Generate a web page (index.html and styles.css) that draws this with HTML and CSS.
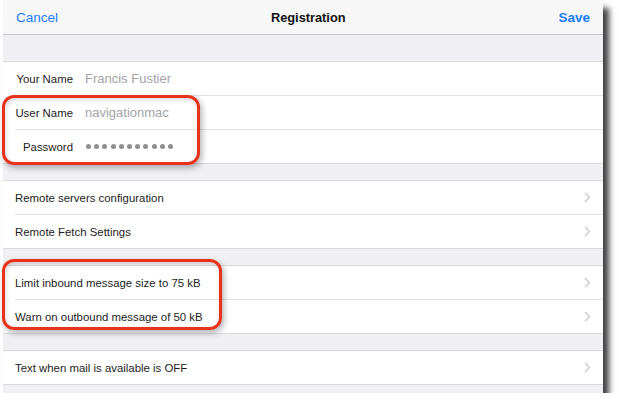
FILE: index.html
```html
<!DOCTYPE html>
<html lang="en">
<head>
  <meta charset="UTF-8" />
  <meta name="viewport" content="width=device-width, initial-scale=1.0"/>
  <title>Registration</title>
  <link rel="stylesheet" href="styles.css">
</head>
<body>
  <div class="screen">
    <div class="navbar">
      <span class="nav-btn">Cancel</span>
      <span class="nav-title">Registration</span>
      <span class="nav-btn save">Save</span>
    </div>

    <div class="group first">
      <div class="row field">
        <span class="label">Your Name</span>
        <span class="value">Francis Fustier</span>
      </div>
      <div class="row field">
        <span class="label">User Name</span>
        <span class="value">navigationmac</span>
      </div>
      <div class="row field">
        <span class="label">Password</span>
        <span class="dots">
          <i></i><i></i><i></i><i></i><i></i><i></i><i></i><i></i><i></i><i></i><i></i>
        </span>
      </div>
    </div>

    <div class="group">
      <div class="row link">
        <span>Remote servers configuration</span>
        <svg class="chev" width="7" height="11" viewBox="0 0 7 11"><polyline points="1,1 5.5,5.5 1,10" /></svg>
      </div>
      <div class="row link">
        <span>Remote Fetch Settings</span>
        <svg class="chev" width="7" height="11" viewBox="0 0 7 11"><polyline points="1,1 5.5,5.5 1,10" /></svg>
      </div>
    </div>

    <div class="group">
      <div class="row link">
        <span>Limit inbound message size to 75 kB</span>
        <svg class="chev" width="7" height="11" viewBox="0 0 7 11"><polyline points="1,1 5.5,5.5 1,10" /></svg>
      </div>
      <div class="row link">
        <span>Warn on outbound message of 50 kB</span>
        <svg class="chev" width="7" height="11" viewBox="0 0 7 11"><polyline points="1,1 5.5,5.5 1,10" /></svg>
      </div>
    </div>

    <div class="group">
      <div class="row link">
        <span>Text when mail is available is OFF</span>
        <svg class="chev" width="7" height="11" viewBox="0 0 7 11"><polyline points="1,1 5.5,5.5 1,10" /></svg>
      </div>
    </div>

    <!-- annotation boxes drawn over the list -->
    <div class="mark mark-login"></div>
    <div class="mark mark-size"></div>
  </div>
</body>
</html>
```

FILE: styles.css
```css
body {
  margin: 0;
  background: #fff;
  font-family: "Liberation Sans", Arial, sans-serif;
}
.screen {
  position: relative;
  margin-left: 3px;
  width: 600px;
  height: 393px;
  background: #efeff4;
  box-shadow: 6px 8px 6px rgba(0,0,0,0.75);
}
.navbar {
  height: 34px;
  background: #f7f7f7;
  border-bottom: 1px solid #c8c7cc;
  display: flex;
  align-items: center;
  justify-content: space-between;
  padding: 0 13px;
}
.nav-btn {
  color: #1a7cf3;
  font-size: 13.5px;
}
.nav-btn.save {
  font-weight: bold;
}
.nav-title {
  font-weight: bold;
  font-size: 12.8px;
  color: #111;
}
.group {
  margin-top: 16px;
  background: #fff;
  border-top: 1px solid #d9d9de;
  border-bottom: 1px solid #d9d9de;
}
.group.first {
  margin-top: 26px;
}
.row {
  height: 33px;
  display: flex;
  align-items: center;
  margin-left: 12px;
  font-size: 11.4px;
  color: #1c1c1c;
  border-top: 1px solid #e3e3e6;
}
.row:first-child {
  border-top: none;
}
.field .label {
  flex-shrink: 0;
  width: 58px;
  text-align: right;
  white-space: nowrap;
  font-size: 11.4px;
}
.field .value {
  margin-left: 12px;
  font-size: 13px;
  color: #a3a3a8;
}
.dots {
  margin-left: 13px;
  display: flex;
  gap: 3.2px;
}
.dots i {
  width: 5px;
  height: 5px;
  border-radius: 50%;
  background: #8e8e93;
}
.link {
  justify-content: space-between;
  padding-right: 12px;
}
.chev polyline {
  fill: none;
  stroke: #c7c7cc;
  stroke-width: 1.3;
}
.mark {
  position: absolute;
  border: 3px solid #e8331c;
  border-radius: 12px;
  box-shadow: 2px 3px 6px rgba(0,0,0,0.3), inset 1px 2px 5px rgba(0,0,0,0.15);
}
.mark-login {
  left: -1px;
  top: 95px;
  width: 192px;
  height: 64px;
}
.mark-size {
  left: -1px;
  top: 259px;
  width: 214px;
  height: 65px;
}
```
